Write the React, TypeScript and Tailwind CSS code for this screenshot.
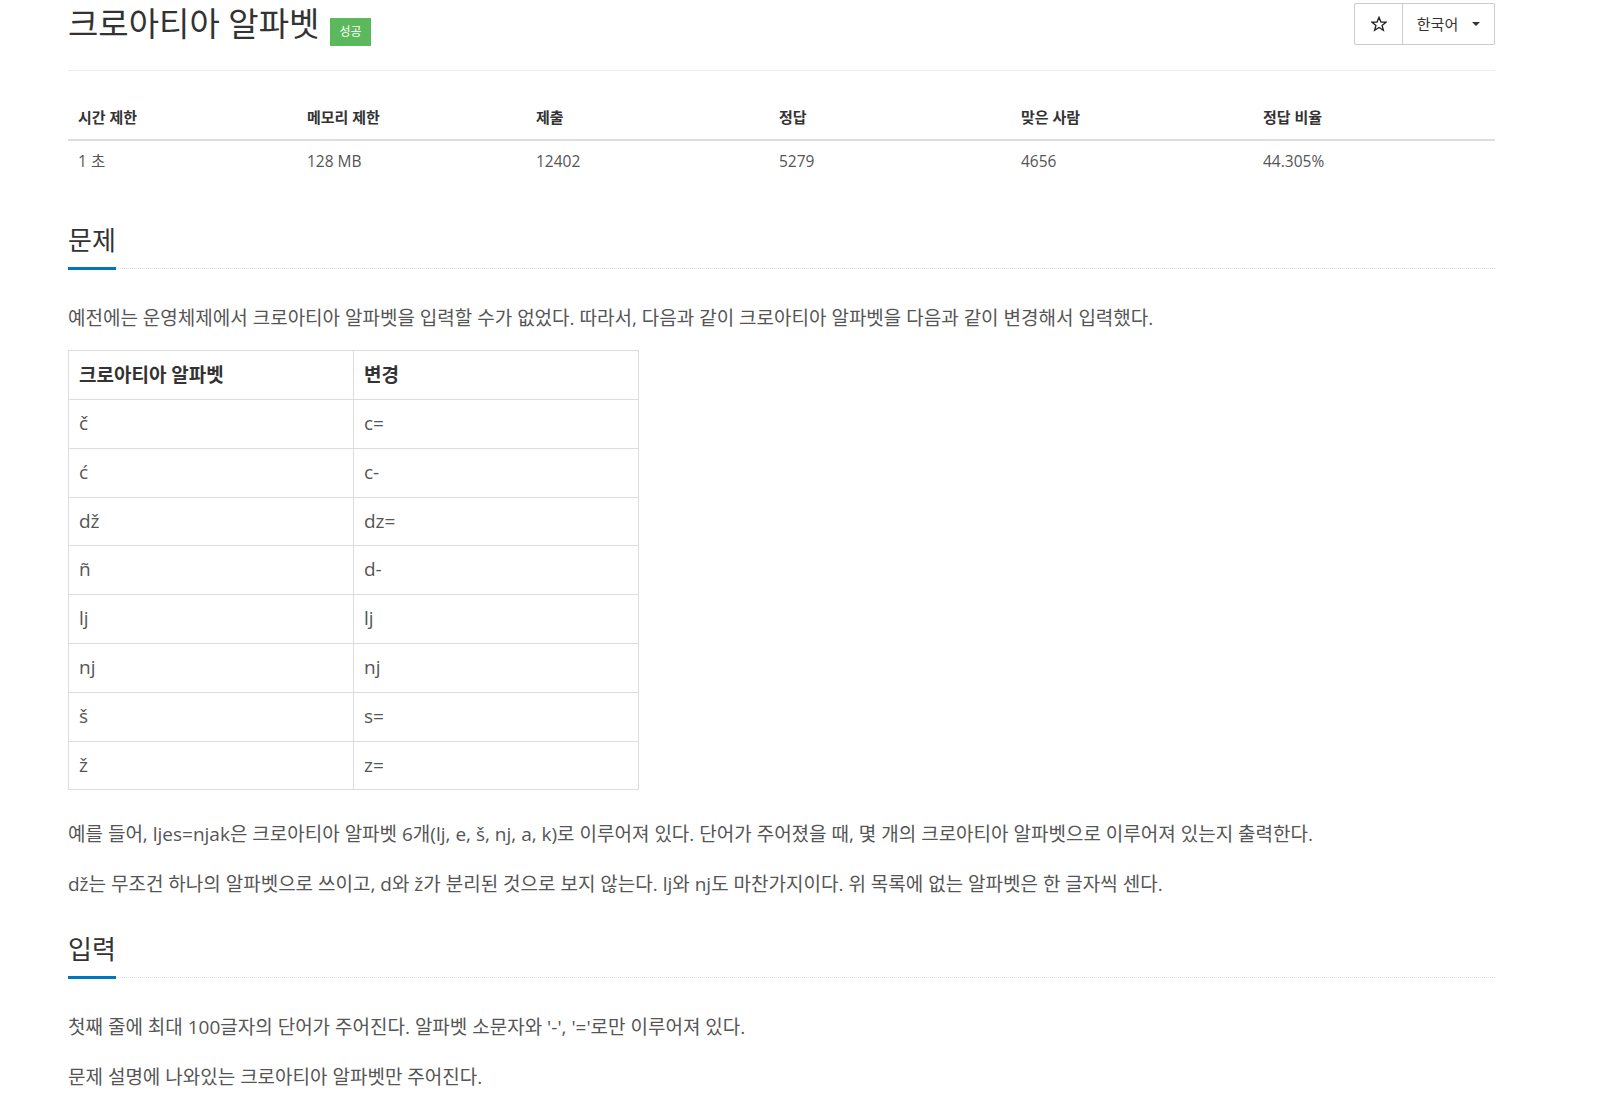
import React from "react";

const stats = [
  { label: "시간 제한", value: "1 초" },
  { label: "메모리 제한", value: "128 MB" },
  { label: "제출", value: "12402" },
  { label: "정답", value: "5279" },
  { label: "맞은 사람", value: "4656" },
  { label: "정답 비율", value: "44.305%" },
];

const alphabet = [
  ["č", "c="],
  ["ć", "c-"],
  ["dž", "dz="],
  ["ñ", "d-"],
  ["lj", "lj"],
  ["nj", "nj"],
  ["š", "s="],
  ["ž", "z="],
];

const SectionHeader = ({ title }: { title: string }) => (
  <div className="border-b border-dotted border-[#ddd] mb-[34px]">
    <h2 className="inline-block -mb-[2px] pb-[12px] border-b-[3px] border-[#0076c0] text-[26px] leading-[30px] text-[#333]">
      {title}
    </h2>
  </div>
);

export default function App() {
  return (
    <div className="min-h-screen bg-white font-['Open_Sans','Noto_Sans_CJK_KR',sans-serif]">
      <div className="ml-[68px] w-[1427px] pt-[3px]">
        {/* Title row */}
        <div className="flex justify-between items-start">
          <div className="flex items-end gap-[11px]">
            <h1 className="mt-[2px] text-[33px] leading-[38px] text-[#333]">크로아티아 알파벳</h1>
            <span className="mb-[-3px] px-[9px] h-[28px] flex items-center bg-[#5cb85c] text-white text-[12px]">
              성공
            </span>
          </div>
          <div className="flex h-[42px] border border-[#ccc] rounded-[2px] text-[#333]">
            <button className="w-[48px] flex items-center justify-center border-r border-[#ccc]">
              <svg width="16" height="16" viewBox="0 0 24 24" fill="none" stroke="#222" strokeWidth="2">
                <polygon points="12,2 14.9,9 22.5,9.3 16.6,14.1 18.6,21.5 12,17.3 5.4,21.5 7.4,14.1 1.5,9.3 9.1,9" />
              </svg>
            </button>
            <button className="w-[91px] flex items-center justify-center gap-[14px] text-[15px]">
              한국어
              <span className="w-0 h-0 border-l-[4px] border-r-[4px] border-t-[4px] border-l-transparent border-r-transparent border-t-[#333]" />
            </button>
          </div>
        </div>

        <div className="mt-[25px] border-t border-[#eee]" />

        {/* Stats table */}
        <div className="mt-[25px] grid grid-cols-[229px_229px_243px_242px_242px_1fr]">
          {stats.map((s) => (
            <div
              key={s.label}
              className="px-[10px] py-[10px] leading-[23px] text-[15px] font-bold text-[#333] border-b-2 border-[#ddd]"
            >
              {s.label}
            </div>
          ))}
          {stats.map((s) => (
            <div key={s.value} className="px-[10px] py-[9px] leading-[23px] text-[15.5px] text-[#555]">
              {s.value}
            </div>
          ))}
        </div>

        {/* Problem */}
        <section className="mt-[43px]">
          <SectionHeader title="문제" />
          <div className="text-[19px] leading-[30px] text-[#555]">
            <p className="mb-[17px]">
              예전에는 운영체제에서 크로아티아 알파벳을 입력할 수가 없었다. 따라서, 다음과 같이 크로아티아 알파벳을
              다음과 같이 변경해서 입력했다.
            </p>
            <table className="w-[571px] border-collapse border border-[#ddd] mb-[29px]">
              <thead>
                <tr>
                  <th className="w-[285px] border border-[#ddd] px-[10px] py-[10px] leading-[28px] text-left font-bold text-[#333]">
                    크로아티아 알파벳
                  </th>
                  <th className="border border-[#ddd] px-[10px] py-[10px] leading-[28px] text-left font-bold text-[#333]">
                    변경
                  </th>
                </tr>
              </thead>
              <tbody>
                {alphabet.map(([a, b]) => (
                  <tr key={a}>
                    <td className="border border-[#ddd] px-[10px] py-[10px] leading-[27.8px]">{a}</td>
                    <td className="border border-[#ddd] px-[10px] py-[10px] leading-[27.8px]">{b}</td>
                  </tr>
                ))}
              </tbody>
            </table>
            <p className="mb-[20px]">
              예를 들어, ljes=njak은 크로아티아 알파벳 6개(lj, e, š, nj, a, k)로 이루어져 있다. 단어가 주어졌을 때, 몇
              개의 크로아티아 알파벳으로 이루어져 있는지 출력한다.
            </p>
            <p className="mb-[20px]">
              dž는 무조건 하나의 알파벳으로 쓰이고, d와 ž가 분리된 것으로 보지 않는다. lj와 nj도 마찬가지이다. 위
              목록에 없는 알파벳은 한 글자씩 센다.
            </p>
          </div>
        </section>

        {/* Input */}
        <section className="mt-[35px]">
          <SectionHeader title="입력" />
          <div className="text-[19px] leading-[30px] text-[#555]">
            <p className="mb-[20px]">
              첫째 줄에 최대 100글자의 단어가 주어진다. 알파벳 소문자와 '-', '='로만 이루어져 있다.
            </p>
            <p className="mb-[20px]">문제 설명에 나와있는 크로아티아 알파벳만 주어진다.</p>
          </div>
        </section>
      </div>
    </div>
  );
}
